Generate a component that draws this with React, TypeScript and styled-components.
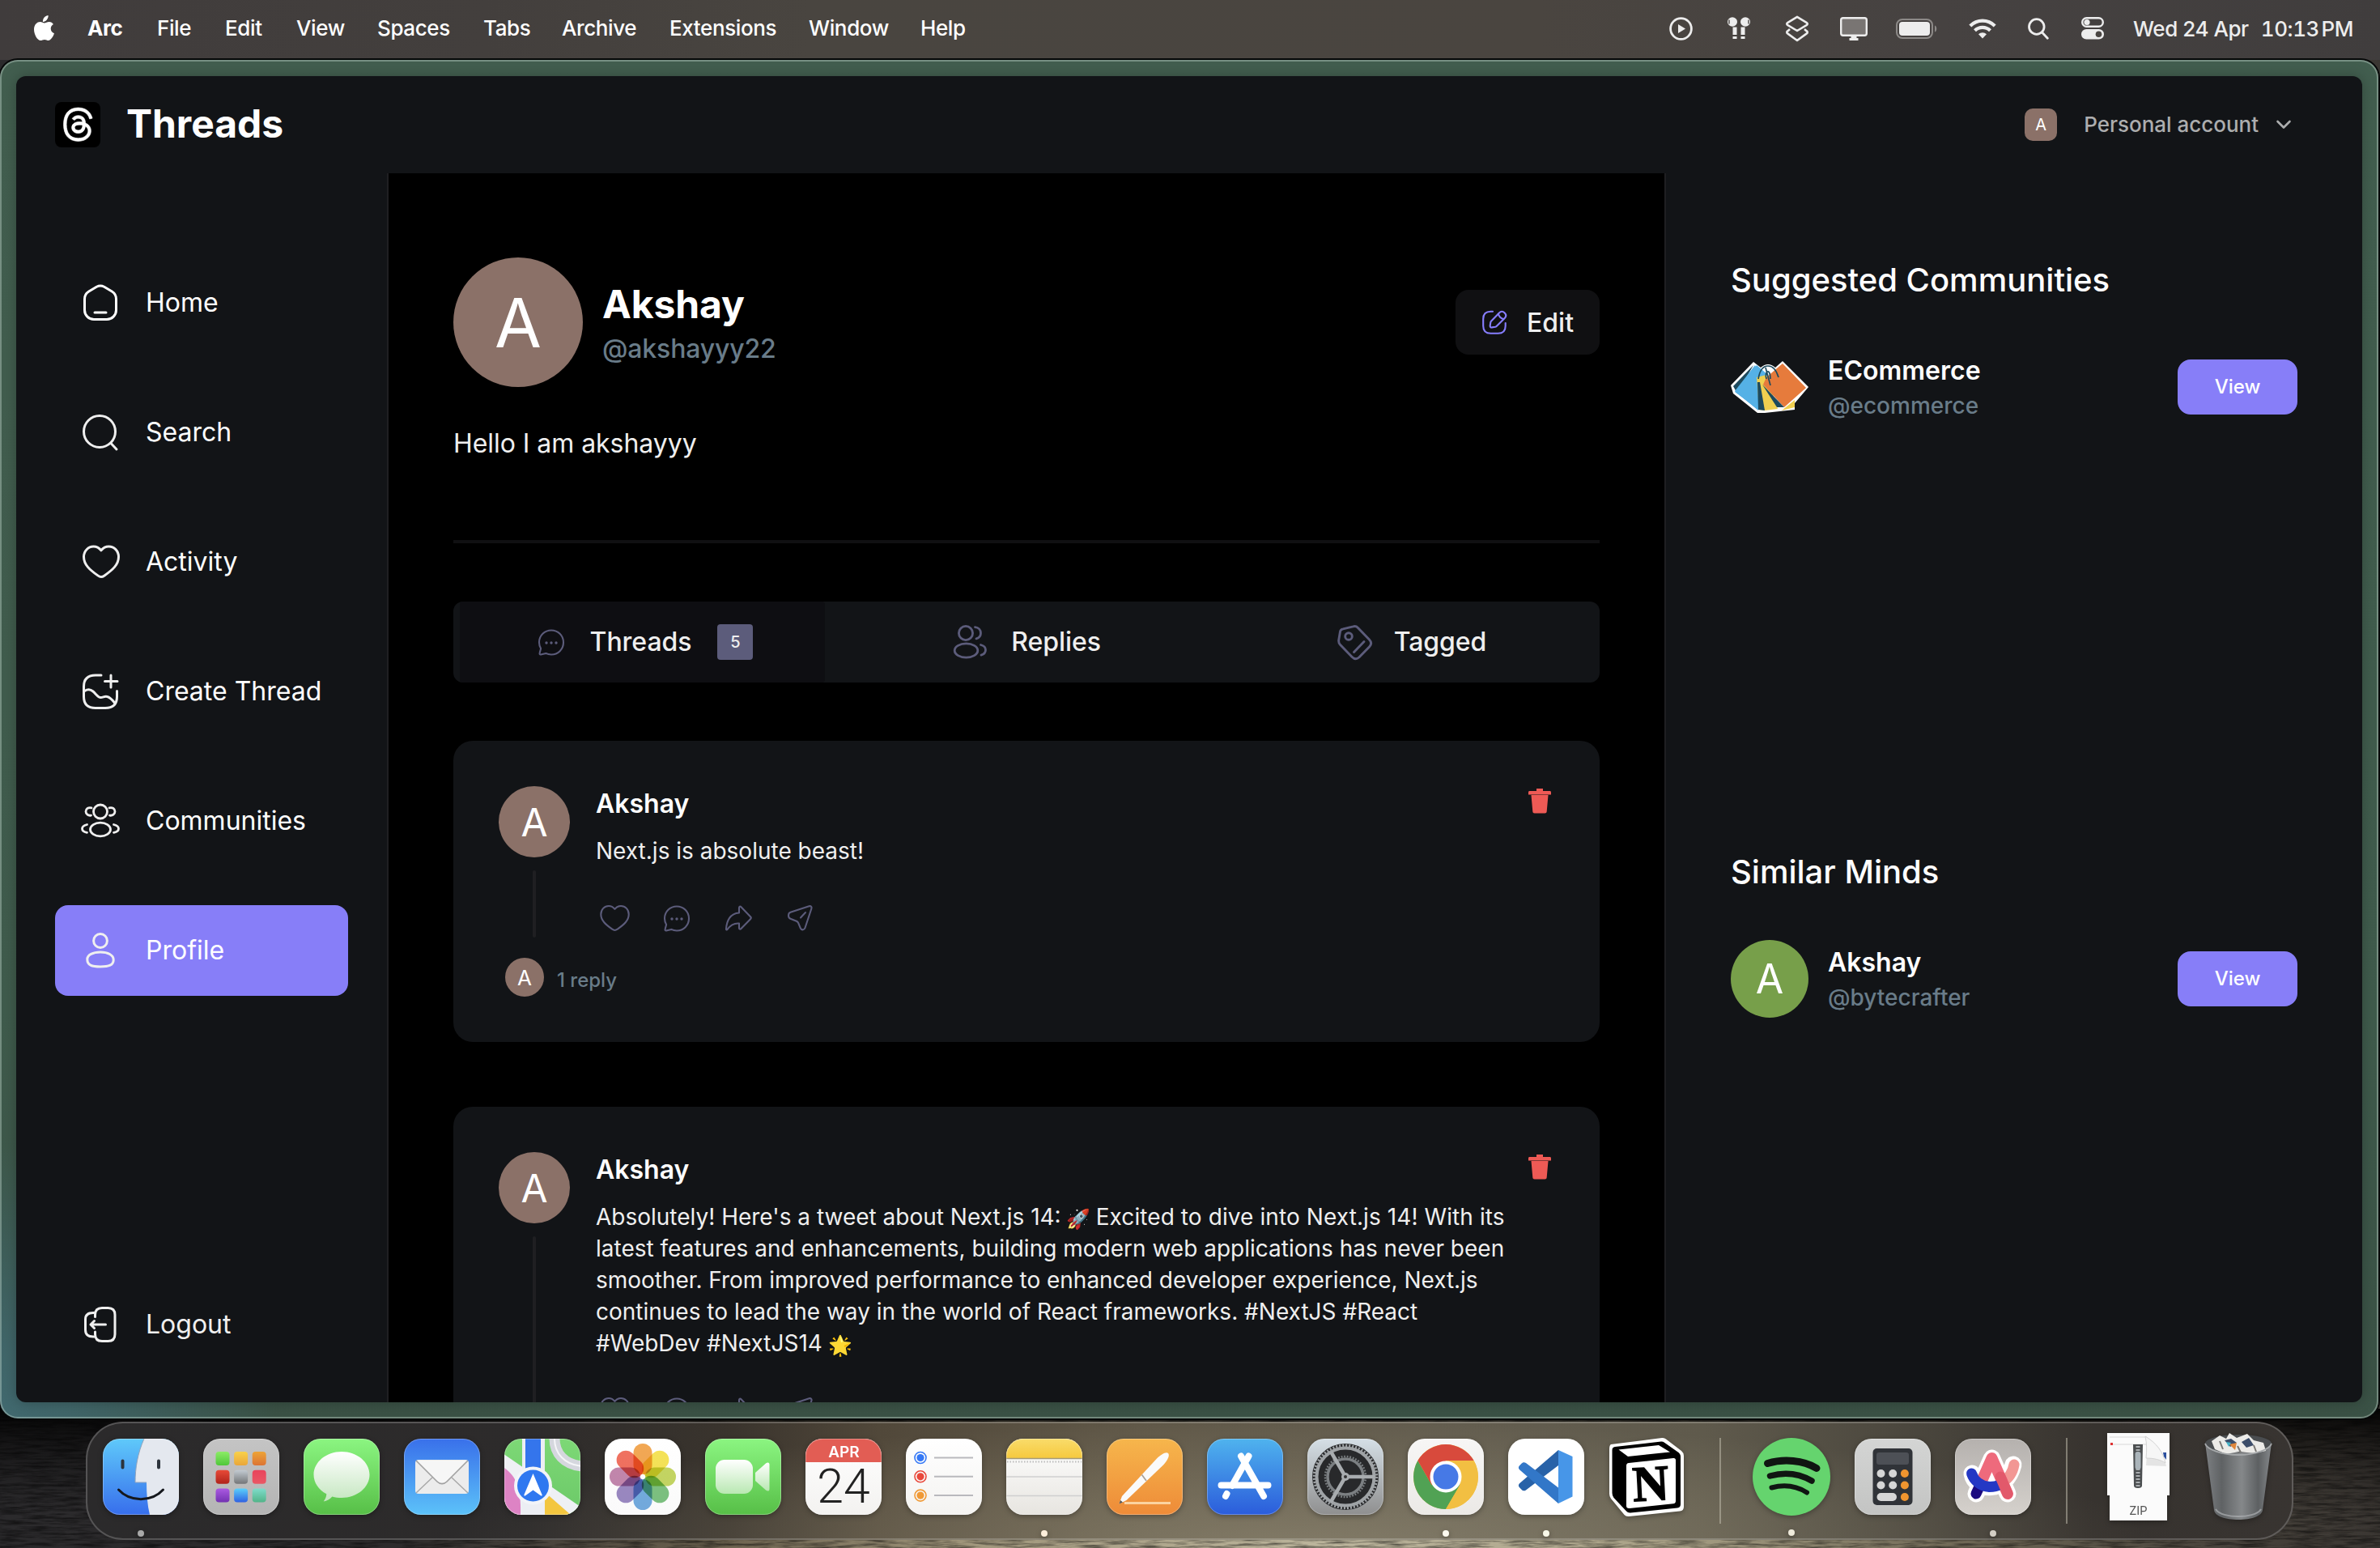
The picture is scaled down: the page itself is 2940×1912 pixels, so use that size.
import React from "react";
import styled, { createGlobalStyle } from "styled-components";

const GlobalStyle = createGlobalStyle`
  *, *::before, *::after { box-sizing: border-box; }
  html, body { margin: 0; padding: 0; background: #1c1b1c; }
  body { font-family: Inter, "Liberation Sans", sans-serif; color: #fff; overflow: hidden; }
  svg { display: block; flex: none; }
`;

/* ---------- Desktop ---------- */

const Desktop = styled.div`
  position: relative;
  width: 2940px;
  height: 1912px;
  display: flex;
  flex-direction: column;
  overflow: hidden;
  background: linear-gradient(90deg, #2b2a2c 0, #2d2b2c 500px, #6e6450 900px, #a1977c 1200px, #bdb69d 1650px, #aaa287 2050px, #6b6452 2450px, #48433c 2750px, #3a3632 2940px);
`;

const Wallpaper = styled.svg`
  position: absolute;
  left: 0;
  bottom: 0;
`;

const Shade = styled.div`
  position: absolute;
  left: 0;
  right: 0;
  bottom: 0;
  height: 172px;
  background: linear-gradient(180deg, rgba(0, 0, 0, 0.95) 0, rgba(0, 0, 0, 0.6) 30px, rgba(0, 0, 0, 0.22) 80px, rgba(0, 0, 0, 0) 130px);
`;

/* ---------- Menu bar ---------- */

const MenuBar = styled.header`
  position: relative;
  flex: none;
  height: 74px;
  display: flex;
  align-items: flex-start;
  justify-content: space-between;
  padding: 0 33px 0 41px;
  background: linear-gradient(90deg, #403c3c 0, #433f3d 600px, #494540 1000px, #4a4540 1900px, #464241 2400px, #403d3d 2940px);
`;

const MenuGroup = styled.div`
  display: flex;
  align-items: center;
  height: 70px;
`;

const MenuItem = styled.span<{ $w: number; $bold?: boolean }>`
  width: ${(p) => p.$w}px;
  font-size: 26px;
  line-height: 32px;
  letter-spacing: -0.38px;
  font-weight: ${(p) => (p.$bold ? 700 : 500)};
  white-space: nowrap;
`;

const StatusSlot = styled.span<{ $w: number }>`
  width: ${(p) => p.$w}px;
  display: flex;
`;

const Clock = styled.span`
  font-size: 26px;
  font-weight: 500;
  color: #ededed;
  white-space: pre;
  letter-spacing: -0.45px;
  width: 272px;
  display: flex;
  justify-content: space-between;
`;

const Time = styled.span`
  font-variant-numeric: tabular-nums;
  word-spacing: -4px;
`;

/* ---------- Browser window ---------- */

const BrowserWindow = styled.div`
  position: relative;
  flex: none;
  width: 2938px;
  height: 1678px;
  border-radius: 22px;
  padding: 18px;
  border: 2px solid rgba(205, 225, 215, 0.38);
  background:
    radial-gradient(circle 340px at 0 100%, #41696f 0, rgba(65, 105, 111, 0.85) 25%, rgba(65, 105, 111, 0) 100%) border-box,
    linear-gradient(180deg, #425e4f 0, #3f5b4c 70%, #3a5145 100%) border-box;
  box-shadow: 0 0 0 2px #060808;
`;

const Page = styled.div`
  width: 2898px;
  height: 1638px;
  border-radius: 12px;
  overflow: hidden;
  display: flex;
  flex-direction: column;
  background: #121417;
  box-shadow: 0 0 16px rgba(0, 0, 0, 0.25);
`;

const TopBar = styled.div`
  flex: none;
  height: 120px;
  padding: 0 87px 0 48px;
  display: flex;
  align-items: center;
  justify-content: space-between;
`;

const Brand = styled.div`
  display: flex;
  align-items: center;
  gap: 32px;
`;

const BrandName = styled.span`
  font-size: 48px;
  font-weight: 700;
  line-height: 58px;
  letter-spacing: -0.05px;
  padding-bottom: 3px;
`;

const Account = styled.div`
  display: flex;
  align-items: center;
  font-size: 26px;
  font-weight: 500;
  color: #acadae;
`;

const AccountName = styled.span`
  margin: 0 21px 0 33px;
  padding-bottom: 2px;
  letter-spacing: -0.02px;
`;

const Avatar = styled.div<{ $size: number; $font: number; $color?: string; $radius?: string }>`
  flex: none;
  width: ${(p) => p.$size}px;
  height: ${(p) => p.$size}px;
  border-radius: ${(p) => p.$radius || "50%"};
  background: ${(p) => p.$color || "#8b7168"};
  color: #fff;
  display: flex;
  align-items: center;
  justify-content: center;
  font-size: ${(p) => p.$font}px;
  font-weight: 400;
`;

const Body = styled.div`
  flex: 1;
  min-height: 0;
  display: grid;
  grid-template-columns: 460px 1576px 1fr;
  grid-template-rows: minmax(0, 1fr);
`;

/* ---------- Left navigation ---------- */

const Sidebar = styled.nav`
  border-right: 2px solid #1f1f22;
  padding: 104px 0 40px 48px;
  display: flex;
  flex-direction: column;
  gap: 48px;
`;

const NavItem = styled.a<{ $active?: boolean; $last?: boolean }>`
  width: 362px;
  height: 112px;
  flex: none;
  border-radius: 16px;
  padding: 0 32px;
  display: flex;
  align-items: center;
  gap: 32px;
  font-size: 32px;
  font-weight: 400;
  color: ${(p) => (p.$last ? "#efefef" : "#fff")};
  background: ${(p) => (p.$active ? "#877ef8" : "transparent")};
  margin-top: ${(p) => (p.$last ? "auto" : "0")};
`;

const NavLabel = styled.span`
  padding-bottom: 2px;
`;

/* ---------- Profile column ---------- */

const Main = styled.main`
  min-height: 0;
  overflow: hidden;
  background: #000;
  padding: 104px 80px 0;
  display: flex;
  flex-direction: column;
`;

const ProfileHead = styled.div`
  flex: none;
  height: 160px;
  display: flex;
  align-items: center;
`;

const ProfileText = styled.div`
  margin: 7px 0 0 24px;
  flex: 1;
`;

const ProfileName = styled.h2`
  margin: 0;
  font-size: 48px;
  font-weight: 700;
  line-height: 58px;
  letter-spacing: -0.1px;
`;

const ProfileHandle = styled.p`
  margin: 0;
  font-size: 32px;
  font-weight: 500;
  line-height: 52px;
  letter-spacing: -0.15px;
  color: #697c89;
`;

const EditButton = styled.button`
  width: 178px;
  height: 80px;
  border: 0;
  border-radius: 16px;
  padding: 0 0 0 32px;
  background: #101012;
  color: #efefef;
  font: 500 32px Inter, "Liberation Sans", sans-serif;
  display: flex;
  align-items: center;
  gap: 24px;
`;

const Bio = styled.p`
  flex: none;
  margin: 48px 0 0;
  font-size: 32px;
  line-height: 44px;
  letter-spacing: -0.05px;
  color: #efefef;
`;

const Divider = styled.div`
  flex: none;
  height: 4px;
  margin: 97px 0 72px;
  background: #101012;
`;

const Tabs = styled.div`
  flex: none;
  height: 100px;
  border-radius: 12px;
  padding: 0 8px;
  background: #121417;
  display: flex;
`;

const Tab = styled.div<{ $w: number; $active?: boolean }>`
  width: ${(p) => p.$w}px;
  border-radius: 4px;
  background: ${(p) => (p.$active ? "#0e0e12" : "transparent")};
  color: #efefef;
  display: flex;
  align-items: center;
  justify-content: center;
  gap: 24px;
  font-size: 32px;
  font-weight: 500;
  letter-spacing: -0.05px;
`;

const TabLabel = styled.span`
  padding-bottom: 2px;
`;

const Count = styled.span`
  width: 44px;
  height: 44px;
  margin-left: 8px;
  border-radius: 4px;
  background: #5c5c7b;
  display: flex;
  align-items: center;
  justify-content: center;
  font-size: 20px;
  font-weight: 500;
`;

const Card = styled.article<{ $gap: number }>`
  flex: none;
  margin-top: ${(p) => p.$gap}px;
  border-radius: 24px;
  padding: 56px;
  background: #121417;
`;

const CardTop = styled.div`
  display: flex;
`;

const Rail = styled.div`
  display: flex;
  flex-direction: column;
  align-items: center;
`;

const RailLine = styled.div`
  flex: 1;
  width: 4px;
  margin-top: 16px;
  border-radius: 2px;
  background: #1f1f22;
`;

const CardContent = styled.div`
  flex: 1;
  margin-left: 32px;
`;

const Author = styled.h4`
  margin: 0;
  padding-top: 1px;
  font-size: 32px;
  line-height: 41px;
  font-weight: 600;
`;

const PostText = styled.p`
  margin: 19px 0 0;
  font-size: 28px;
  line-height: 39px;
  color: #efefef;
  white-space: pre;
`;

const TextRun = styled.span<{ $spacing: number }>`
  letter-spacing: ${(p) => p.$spacing}px;
`;

const Emoji = styled.span`
  display: inline-block;
  width: 28px;
  height: 28px;
  margin-left: 7px;
  font: 24px/28px "Noto Color Emoji", sans-serif;
  vertical-align: -1px;
`;

const Actions = styled.div`
  display: flex;
  gap: 28px;
  margin-top: 39px;
`;

const TrashSlot = styled.div`
  margin: 3px 4px 0 0;
`;

const Replies = styled.div`
  display: flex;
  align-items: center;
  gap: 16px;
  margin: 25px 0 0 8px;
`;

const ReplyCount = styled.span`
  margin-top: 7px;
  font-size: 24px;
  font-weight: 500;
  line-height: 30px;
  color: #697c89;
`;

/* ---------- Right column ---------- */

const Aside = styled.aside`
  border-left: 2px solid #1f1f22;
  padding: 104px 80px 0;
`;

const Section = styled.section`
  height: 731px;
`;

const SectionTitle = styled.h3`
  margin: 0 0 56px;
  font-size: 40px;
  font-weight: 500;
  line-height: 56px;
`;

const UserRow = styled.div`
  display: flex;
  align-items: center;
  height: 96px;
`;

const UserText = styled.div`
  flex: 1;
  margin: 1px 0 0 24px;
`;

const UserName = styled.h4`
  margin: 0;
  font-size: 32px;
  line-height: 44px;
  font-weight: 600;
`;

const UserHandle = styled.p`
  margin: 0;
  font-size: 28px;
  line-height: 42px;
  font-weight: 500;
  color: #697c89;
`;

const ViewButton = styled.button`
  width: 148px;
  height: 68px;
  border: 0;
  border-radius: 16px;
  padding: 0 0 2px;
  background: #877ef8;
  color: #fff;
  font: 500 24px Inter, "Liberation Sans", sans-serif;
`;

/* ---------- Dock ---------- */

const DockBar = styled.div`
  position: relative;
  flex: none;
  width: 2727px;
  height: 146px;
  margin: 4px 0 0 106px;
  border-radius: 46px;
  border: 2px solid rgba(255, 255, 255, 0.2);
  padding: 0 23px 0 19px;
  display: flex;
  align-items: center;
  gap: 30px;
  background:
    radial-gradient(ellipse 1050px 150px at 1500px 150px, rgba(160, 152, 128, 0.5), rgba(160, 152, 128, 0)) border-box,
    linear-gradient(90deg, #2b2a2b 0, #2d2b2b 550px, #3a342d 800px, #51483a 980px, #605848 1300px, #635d4f 1700px, #5f5a4c 2000px, #47433b 2300px, #37332f 2480px, #383431 2727px) border-box;
`;

const DockItem = styled.div<{ $w?: number; $ml?: number; $dot?: string }>`
  position: relative;
  flex: none;
  width: ${(p) => p.$w || 94}px;
  margin-left: ${(p) => p.$ml || 0}px;
  margin-top: -10px;
  display: flex;
  justify-content: center;
  filter: drop-shadow(0 2px 3px rgba(0, 0, 0, 0.3));
  &::after {
    content: "";
    display: ${(p) => (p.$dot ? "block" : "none")};
    position: absolute;
    left: calc(50% - 4px);
    top: 113px;
    width: 8px;
    height: 8px;
    border-radius: 50%;
    background: ${(p) => p.$dot || "transparent"};
  }
`;

const Separator = styled.div<{ $ml: number; $mr: number }>`
  flex: none;
  width: 2px;
  height: 106px;
  background: rgba(200, 195, 180, 0.5);
  margin: 0 ${(p) => p.$mr}px 0 ${(p) => p.$ml}px;
`;

/* ---------- Icons ---------- */

type IconProps = { size?: number; color?: string; width?: number; children: React.ReactNode; box?: string };
const Line = ({ size = 48, color = "#efefef", width = 3, box = "0 0 48 48", children }: IconProps) => (
  <svg width={size} height={size} viewBox={box} fill="none" stroke={color} strokeWidth={width} strokeLinecap="round" strokeLinejoin="round">
    {children}
  </svg>
);

const HomeIcon = () => (
  <Line color="#fff">
    <path d="M19.3 4.3a10 10 0 0 1 9.4 0L38.3 10a11 11 0 0 1 5.2 9.4V33A11.5 11.5 0 0 1 32 44.5H16A11.5 11.5 0 0 1 4.500 33V19.400A11 11 0 0 1 9.700 10z" />
    <path d="M17 36h14" />
  </Line>
);
const SearchIcon = () => (
  <Line>
    <circle cx="23" cy="23" r="19.500" />
    <path d="M37 37.500 44 45" />
  </Line>
);
const HeartShape = () => (
  <path d="M24.900 42.500c-1.500 0-2.600-.6-4-1.600C11 34 3.500 27.500 3.500 17.800 3.500 10.500 9 5 15.500 5c4 0 7 1.800 9.400 4.800C27.300 6.800 30.500 5 34.400 5c6.600 0 12.100 5.500 12.100 12.800 0 9.700-7.500 16.200-17.500 23.100-1.400 1-2.600 1.600-4.100 1.600z" />
);
const ActivityIcon = () => (
  <Line>
    <HeartShape />
  </Line>
);
const CreateIcon = () => (
  <Line>
    <path d="M25 4h-7C8 4 3.500 8.500 3.500 18v12.500c0 9.500 4.500 14 14.500 14h12c10 0 14.500-4.500 14.500-14V23.500" />
    <path d="M29.500 11.500H45M37 4v15" />
    <path d="M4.500 23.500c3-2 7-2.500 10.500.5 4 3.500 6 7.500 9.500 7.500 3 0 4.500-2 8-1 4 1 7 5 9.500 8" />
  </Line>
);
const CommunitiesIcon = () => (
  <Line width={2.8}>
    <circle cx="24" cy="12.500" r="8.500" />
    <ellipse cx="24" cy="34.500" rx="12.500" ry="8.300" />
    <path d="M13 7.800C9 6.800 6 9 6 12.300s3 5.500 6.500 4.800M35 7.800c4-1 7 1.200 7 4.500s-3 5.500-6.500 4.800" />
    <path d="M7.500 28.500c-3.500.8-6 2.600-6 4.900s2.500 4.200 6 4.900M40.500 28.500c3.500.8 6 2.600 6 4.900s-2.500 4.200-6 4.900" />
  </Line>
);
const ProfileIcon = () => (
  <Line>
    <circle cx="24" cy="12" r="8.400" />
    <path d="M7.800 35c0-5.500 7-9 16.200-9s16.200 3.500 16.200 9.500c0 6.500-5.500 8.500-16.200 8.500S7.800 42 7.800 35z" />
  </Line>
);
const LogoutIcon = () => (
  <Line>
    <path d="M17.500 14.500V12c0-6 3-8.500 8.500-8.500h7.500c6 0 8.500 3 8.500 8.500v24c0 5.500-2.500 8.500-8.500 8.500H26c-5.500 0-8.500-2.500-8.500-8.500v-3" />
    <path d="M16 9.500h-1c-6 0-9.500 2-9.500 8v13c0 6 3 8.500 9.500 8.500h1" />
    <path d="M30.500 24H12M16.500 19.500 12 24l4.500 4.500" />
  </Line>
);

const dim = "#5c5c7b";
const LikeIcon = () => (
  <Line color={dim} width={2.6} box="-4.400 -6.200 60 60">
    <HeartShape />
  </Line>
);
const CommentIcon = () => (
  <Line color={dim} width={2.1}>
    <path d="M24 9.500c8.300 0 15 6.600 15 15s-6.700 15-15 15c-2.400 0-4.700-.5-6.700-1.600l-6.300 1.500c-1 .2-1.700-.6-1.400-1.600l1.500-5.800A15 15 0 0 1 9 24.500c0-8.400 6.700-15 15-15z" />
    <g fill={dim} stroke="none">
      <circle cx="18" cy="25" r="1.700" />
      <circle cx="24" cy="25" r="1.700" />
      <circle cx="30" cy="25" r="1.700" />
    </g>
  </Line>
);
const RepostIcon = () => (
  <Line color={dim} width={2.1}>
    <path d="M25 17.500v-6.200c0-1.700 1.300-2.200 2.500-1L39 22.300c1 1 1 2 0 3L27.500 37c-1.200 1.200-2.500.7-2.500-1v-5.500c-7-.6-11 2.500-14.500 7.500-.6.900-1.600.6-1.500-.5C9.600 27.500 14 18 25 17.500z" />
  </Line>
);
const ShareIcon = () => (
  <Line color={dim} width={2.1}>
    <path d="M12.500 16.800 35.500 9.300c2.200-.7 3.600.7 2.900 2.900L30.500 36c-1 3-4.500 3.200-5.700.3l-2.700-6.400a4 4 0 0 0-2.200-2.200l-7.500-3c-3.300-1.400-3.200-6.700.1-7.900z" />
    <path d="m25 23.500 6-6.500" />
  </Line>
);
const RepliesIcon = () => (
  <Line color={dim} width={2.8} box="-1 0 48 48">
    <circle cx="15" cy="13" r="8.600" />
    <path d="M26.500 5.700c4.200.4 7 3.500 7 7.300 0 3.500-2.300 6-5.500 6.800" />
    <ellipse cx="15.500" cy="34.500" rx="14.300" ry="8.600" />
    <path d="M33.500 27.500c3.800 1 6 3.200 6 6.200 0 3.200-2 5.300-5.500 6.400" />
  </Line>
);
const TagIcon = () => (
  <Line color={dim} width={2.9}>
    <path d="M9 7.800 21.500 4.800a6 6 0 0 1 6 1.700l14 14.500c2.800 3 2.800 6 .2 8.700L29 42.700c-2.800 2.600-6 2.600-8.800-.2L5.700 27.500c-1.600-1.600-2.300-3.500-2-5.800L5.500 11c.3-1.700 1.600-2.800 3.500-3.200z" />
    <circle cx="16" cy="17" r="4.300" />
    <path d="M22.500 36.500 35 23.500" />
  </Line>
);
const EditIcon = () => (
  <Line size={32} box="0 0 32 32" color="#877eff" width={2.1}>
    <path d="M14 2.800h-2.500C5 2.800 2.200 5.500 2.200 12v8.500C2.200 27 5 29.800 11.500 29.800h9c6.500 0 9.200-2.800 9.200-9.300V17" />
    <path d="m22.200 4.200-10 10.200c-.4.400-.8 1.200-.9 1.700l-.6 4c-.2 1.500.8 2.500 2.300 2.300l3.900-.6c.5-.1 1.300-.5 1.700-.9L28.700 11c1.800-1.800 2.600-3.800 0-6.500s-4.800-2-6.500-.3z" />
    <path d="M20.800 5.800c.9 3 3.200 5.400 6.200 6.300" />
  </Line>
);
const TrashIcon = () => (
  <svg width="28" height="31" viewBox="0 0 28 31" fill="#ee5a55">
    <path d="M10 0h8v3h8.500c.9 0 1.500.6 1.500 1.500v3H0v-3C0 3.600.6 3 1.500 3H10zM3.500 8h21l-1.800 20.300c-.1 1.500-1 2.200-2.400 2.200H7.700c-1.400 0-2.300-.7-2.400-2.200z" />
  </svg>
);
const Chevron = () => (
  <Line size={20} box="0 0 20 20" color="#acadae" width={2.6}>
    <path d="m2.500 6 7.500 7.500L17.500 6" />
  </Line>
);

const ThreadsLogo = () => (
  <svg width="56" height="56" viewBox="0 0 56 56">
    <rect width="56" height="56" rx="8" fill="#000" />
    <g transform="translate(7.700 7) scale(.2155)" fill="#fff">
      <path d="M141.537 88.988a66.667 66.667 0 0 0-2.518-1.143c-1.482-27.307-16.403-42.940-41.457-43.100h-.34c-14.986 0-27.449 6.396-35.120 18.036l13.779 9.452c5.730-8.695 14.724-10.548 21.348-10.548h.229c8.249.053 14.474 2.452 18.503 7.129 2.932 3.405 4.893 8.111 5.864 14.050-7.314-1.243-15.224-1.626-23.680-1.140-23.820 1.371-39.134 15.264-38.105 34.568.522 9.792 5.400 18.216 13.735 23.719 7.047 4.652 16.124 6.927 25.557 6.412 12.458-.683 22.231-5.436 29.049-14.127 5.178-6.600 8.453-15.153 9.899-25.930 5.937 3.583 10.337 8.298 12.767 13.966 4.132 9.635 4.373 25.468-8.546 38.376-11.319 11.308-24.925 16.200-45.488 16.351-22.809-.169-40.060-7.484-51.275-21.742C35.236 139.966 29.808 120.682 29.605 96c.203-24.682 5.630-43.966 16.133-57.317C56.954 24.425 74.204 17.110 97.013 16.940c22.975.17 40.526 7.520 52.171 21.847 5.710 7.026 10.015 15.860 12.853 26.162l16.147-4.308c-3.440-12.680-8.853-23.606-16.219-32.668C147.036 9.607 125.202.195 97.070 0h-.113C68.882.194 47.292 9.642 32.788 28.080 19.882 44.485 13.224 67.315 13.001 95.932L13 96v.067c.224 28.617 6.882 51.447 19.788 67.854C47.292 182.358 68.882 191.806 96.957 192h.113c24.960-.173 42.554-6.708 57.048-21.189 18.963-18.945 18.392-42.692 12.142-57.270-4.484-10.454-13.033-18.945-24.723-24.553zM98.440 129.507c-10.440.588-21.286-4.098-21.820-14.135-.397-7.442 5.296-15.746 22.461-16.735 1.966-.114 3.895-.169 5.790-.169 6.235 0 12.068.606 17.371 1.765-1.978 24.702-13.580 28.713-23.802 29.274z" stroke="#fff" strokeWidth="3" />
    </g>
  </svg>
);

const CommunityImage = () => (
  <svg width="96" height="96" viewBox="0 0 96 96">
    <path d="M28 17 37 24q9-8 18 0L64 16 96 48 79 68 79 76 42 80 33 80 3 56 0 46z" fill="#fff" />
    <path d="M28 21 3 47l5 9z" fill="#1d4a5e" />
    <path d="M30 21 5 53l29 24 4-40z" fill="#55b1e6" />
    <path d="M32 21 46 33 33 41 34 76 5 54z" fill="#55b1e6" />
    <path d="M32 36 44 33 58 75 42 77 35 76z" fill="#f0d050" />
    <path d="M33 42 36 42 42 77 34 76z" fill="#1d4a5e" />
    <path d="M64 19 93 49 66 73 40 45 44 36z" fill="#e67b3c" />
    <path d="M39 45 66 73 57 73z" fill="#1d4a5e" />
    <path d="M79 64v9l-16 4z" fill="#f0d050" />
    <path d="M34 38c2-12 7-16 12-16s10 4 13 14M44 38c-3-10 5-14 5 0M43 24l6 22" stroke="#1d4a5e" strokeWidth="1.700" fill="none" />
  </svg>
);

/* Menu bar glyphs */
const AppleLogo = () => (
  <svg width="27" height="32" viewBox="0 0 27 32" fill="#fff">
    <path d="M18.600 0c.2 2.100-.6 4.100-1.800 5.500C15.600 7 13.700 8 11.900 7.900c-.2-2 .7-4.100 1.800-5.400C15 1.100 17 .1 18.600 0zM24.900 10.900c-2 1.200-3.200 3-3.200 5.400 0 2.700 1.700 5 4.300 6-1 3.300-4.200 8.700-7.100 8.700-1.700 0-2.700-1.100-4.900-1.100s-3.300 1.100-4.900 1.100C5.400 31 1 23.600 1 17.400 1 11.400 4.800 8 8.600 8c2.200 0 4 1.400 5.300 1.400 1.200 0 3.300-1.500 5.900-1.500 2.100.1 4 1.100 5.100 3z" />
  </svg>
);
const PlayGlyph = () => (
  <svg width="29" height="29" viewBox="0 0 29 29">
    <circle cx="14.500" cy="14.500" r="12.900" fill="none" stroke="#ededed" strokeWidth="2.800" />
    <path d="m11 9 9 5.500-9 5.500z" fill="#ededed" />
  </svg>
);
const PodsGlyph = () => (
  <svg width="29" height="28" viewBox="0 0 29 28" fill="#ededed">
    <ellipse cx="6" cy="6" rx="6" ry="5.700" />
    <ellipse cx="22" cy="6" rx="6" ry="5.700" />
    <path d="M6.500 12.500h5v9.500h-5zM16.500 12.500h5v9.500h-5zM6.500 24h5v3h-5zM16.500 24h5v3h-5z" />
    <path d="M2 3.500v5M26 3.500v5" stroke="#4a4643" strokeWidth="1.400" />
  </svg>
);
const LayersGlyph = () => (
  <svg width="30" height="33" viewBox="0 0 30 33" fill="none" stroke="#ededed" strokeWidth="2.600" strokeLinejoin="round">
    <path d="m15 1.800 11.500 7q2.500 1.700 0 3.400L15 19 3.500 12.200Q1 10.500 3.500 8.800z" />
    <path d="m6 17-2.500 2.200q-2.500 1.700 0 3.400L15 31l11.500-8.400q2.500-1.700 0-3.400L24 17" />
  </svg>
);
const DisplayGlyph = () => (
  <svg width="34" height="29" viewBox="0 0 34 29">
    <rect x="1.200" y="1.200" width="31.600" height="21.600" rx="2.500" fill="#797573" stroke="#ededed" strokeWidth="2.400" />
    <path d="M13.500 23h7v3h2V29h-11v-3h2z" fill="#ededed" />
  </svg>
);
const BatteryGlyph = () => (
  <svg width="52" height="25" viewBox="0 0 52 25">
    <rect x="1" y="1" width="44" height="23" rx="7" fill="none" stroke="#8d8a88" strokeWidth="2" />
    <rect x="4" y="4" width="38" height="17" rx="4" fill="#ededed" />
    <path d="M48 8.500c3 1 3 7 0 8z" fill="#8d8a88" />
  </svg>
);
const WifiGlyph = () => (
  <svg width="34" height="26" viewBox="0 0 34 26" fill="none" stroke="#ededed" strokeWidth="4.200">
    <path d="M1.800 10a21.500 21.500 0 0 1 30.400 0M7.500 15.800a13.500 13.500 0 0 1 19 0" />
    <path d="m17 25.500-5-5.200a7 7 0 0 1 10 0z" fill="#ededed" stroke="none" />
  </svg>
);
const FindGlyph = () => (
  <svg width="26" height="27" viewBox="0 0 26 27" fill="none" stroke="#ededed" strokeWidth="2.800" strokeLinecap="round">
    <circle cx="10.800" cy="11" r="9.300" />
    <path d="m17.800 18.300 6.500 7" />
  </svg>
);
const ControlGlyph = () => (
  <svg width="28" height="28" viewBox="0 0 28 28">
    <rect x="1.200" y="1.200" width="25.600" height="10.600" rx="5.300" fill="none" stroke="#ededed" strokeWidth="2.400" />
    <circle cx="7" cy="6.500" r="3.600" fill="#ededed" />
    <rect y="15" width="28" height="12.500" rx="6.250" fill="#ededed" />
    <circle cx="21.500" cy="21.200" r="3.800" fill="#4a4643" />
  </svg>
);

/* Dock tiles */
type TileProps = { id: string; from: string; to: string; children?: React.ReactNode };
const Tile = ({ id, from, to, children }: TileProps) => (
  <svg width="94" height="94" viewBox="0 0 94 94">
    <defs>
      <linearGradient id={id} x1="0" y1="0" x2="0" y2="1">
        <stop offset="0" stopColor={from} />
        <stop offset="1" stopColor={to} />
      </linearGradient>
      <clipPath id={id + "-clip"}>
        <rect width="94" height="94" rx="21" />
      </clipPath>
    </defs>
    <g clipPath={`url(#${id}-clip)`}>
      <rect width="94" height="94" fill={`url(#${id})`} />
      {children}
    </g>
    <rect x=".5" y=".5" width="93" height="93" rx="20.500" fill="none" stroke="#fff" strokeOpacity=".28" />
  </svg>
);

const Finder = () => (
  <Tile id="finder" from="#5fc9fa" to="#376eec">
    <path d="M51 0c-8 18-11 36-11 54h14c0 14 1 28 4 40h36V0z" fill="#e4e8ef" />
    <path d="M24.500 27.500v8M69 27.500v8" stroke="#2c333c" strokeWidth="4" strokeLinecap="round" />
    <path d="M51 0c-8 18-11 36-11 54h14" fill="none" stroke="#8fa3bd" strokeWidth="1" />
    <path d="M19.500 63c14 15.500 41 15.500 55 0" fill="none" stroke="#15181d" strokeWidth="3" strokeLinecap="round" />
  </Tile>
);
const padColors = [
  ["#8cec66", "#4fc73a"], ["#f8d14a", "#eaa63a"], ["#eda437", "#dc7434"],
  ["#e84a38", "#b0241c"], ["#c3cbd2", "#747678"], ["#e9445c", "#e95865"],
  ["#ab5ae2", "#7332b2"], ["#5bd0fb", "#2f62e2"], ["#7fdccb", "#52b489"],
];
const Launchpad = () => (
  <Tile id="launchpad" from="#c4c4c4" to="#b4b4b4">
    {padColors.map(([a, b], i) => (
      <g key={a}>
        <linearGradient id={"pad" + i} x1="0" y1="0" x2="0" y2="1">
          <stop offset="0" stopColor={a} />
          <stop offset="1" stopColor={b} />
        </linearGradient>
        <rect x={15.5 + (i % 3) * 22.600} y={16 + Math.floor(i / 3) * 22.700} width="17" height="17" rx="4" fill={`url(#pad${i})`} />
      </g>
    ))}
  </Tile>
);
const Messages = () => (
  <Tile id="messages" from="#8bf581" to="#57bf47">
    <linearGradient id="bubble" x1="0" y1="0" x2="0" y2="1">
      <stop offset="0" stopColor="#fff" />
      <stop offset="1" stopColor="#c4e6bf" />
    </linearGradient>
    <path d="M47 16c19 0 34.500 12.800 34.500 28.500S66 73 47 73c-4 0-8-.6-11.600-1.600-3 3.400-6.500 5.300-10.700 6.200 2.200-3 3.500-6 3.600-9.300C18.500 63 12.500 54.300 12.500 44.500 12.500 28.800 28 16 47 16z" fill="url(#bubble)" />
  </Tile>
);
const Mail = () => (
  <Tile id="mail" from="#3970ea" to="#5cc2f9">
    <rect x="14" y="26" width="66" height="42" rx="4" fill="#ececec" />
    <path d="m15 67 20-19M79 67 59 48" stroke="#a9a9a9" strokeWidth="1.500" />
    <path d="m15 27 26 26c3.500 3.500 8.500 3.500 12 0l26-26" fill="#f6f6f6" stroke="#a0a0a0" strokeWidth="1.600" />
  </Tile>
);
const Maps = () => (
  <Tile id="maps" from="#7dd876" to="#6cc968">
    <path d="M-2 18 94 84v12H-2z" fill="#eef0f4" />
    <path d="M0 36c14 10 21 24 20 58H0z" fill="#dd83c4" />
    <path d="m50 66 32 28H50z" fill="#f3c63f" />
    <path d="M22 0h28v94H22z" fill="#eceef3" />
    <path d="M26 0h19v60H26z" fill="#3475ec" />
    <path d="M62 0c0 18 12 32 34 34" fill="none" stroke="#d5d7de" strokeWidth="13" />
    <path d="M62 0c0 18 12 32 34 34" fill="none" stroke="#f5f5f8" strokeWidth="2" />
    <circle cx="35.500" cy="58" r="23.500" fill="#f2f4f8" />
    <circle cx="35.500" cy="58" r="19.500" fill="#2f78f0" />
    <path d="m35.500 43 11 26c.6 1.500-.6 2-1.600 1.300L35.500 63.500l-9.400 6.800c-1 .7-2.200.2-1.600-1.300z" fill="#fff" />
  </Tile>
);
const petals = ["#f09a38", "#f4df3c", "#bcd049", "#67b86c", "#5d9edb", "#8a76b8", "#b9739f", "#ee5a45"];
const Photos = () => (
  <Tile id="photos" from="#fff" to="#fafafa">
    {petals.map((c, i) => (
      <rect key={c} x="35.500" y="6" width="23" height="38" rx="11.500" fill={c} opacity=".86" transform={`rotate(${i * 45} 47 47)`} style={{ mixBlendMode: "multiply" }} />
    ))}
  </Tile>
);
const FaceTime = () => (
  <Tile id="facetime" from="#8bf581" to="#57bf47">
    <linearGradient id="cam" x1="0" y1="0" x2="0" y2="1">
      <stop offset="0" stopColor="#fff" />
      <stop offset="1" stopColor="#b9e8b2" />
    </linearGradient>
    <rect x="13" y="26" width="46" height="42" rx="11" fill="url(#cam)" />
    <path d="M62 42 75 30.500c2.500-2 4.500-1.200 4.500 1.500v30c0 2.700-2 3.500-4.500 1.500L62 52z" fill="url(#cam)" />
  </Tile>
);
const Calendar = () => (
  <Tile id="calendar" from="#fff" to="#f3f2f0">
    <rect width="94" height="29" fill="#e25d54" />
    <text x="47.500" y="22.500" textAnchor="middle" fontFamily="Inter, sans-serif" fontSize="19" fontWeight="600" fill="#fff">APR</text>
    <text x="47" y="79" textAnchor="middle" fontFamily="Roboto, sans-serif" fontSize="59" fontWeight="300" fill="#222">24</text>
  </Tile>
);
const Reminders = () => (
  <Tile id="reminders" from="#fff" to="#f4f3f1">
    {["#3478f6", "#e9493c", "#f09a37"].map((c, i) => (
      <g key={c}>
        <circle cx="18" cy={23.500 + i * 23.300} r="7" fill="none" stroke={c} strokeWidth="1.600" />
        <circle cx="18" cy={23.500 + i * 23.300} r="4.600" fill={c} />
        <path d={`M35 ${23.500 + i * 23.300}h48`} stroke="#b9b9bd" strokeWidth="2" />
      </g>
    ))}
  </Tile>
);
const Notes = () => (
  <Tile id="notes" from="#fff" to="#e7e5e0">
    <linearGradient id="pad-top" x1="0" y1="0" x2="0" y2="1">
      <stop offset="0" stopColor="#f9dc6b" />
      <stop offset="1" stopColor="#f6c93e" />
    </linearGradient>
    <rect width="94" height="24" fill="url(#pad-top)" />
    <path d="M0 24.500h94" stroke="#a59a78" strokeWidth="1.500" />
    <path d="M1 28.500h92" stroke="#bbb" strokeWidth="2" strokeDasharray="1.500 2" />
    <path d="M0 47h94M0 70.500h94" stroke="#cfcfcf" strokeWidth="1.500" />
  </Tile>
);
const Pages = () => (
  <Tile id="pages" from="#f6b64c" to="#ee8b38">
    <path d="M22 79.500h57" stroke="#fbd3a0" strokeWidth="3" />
    <path d="M15.500 80.500 19 71 62 24.500c5-5 11.500-9 14-6.500s-1 9-5.500 14L24.500 76z" fill="#fafafa" />
    <path d="m43.500 44.500 5.500 7.500" stroke="#a9a29a" strokeWidth="1.800" />
    <path d="M15.500 80.500 17 76l3 2.500z" fill="#555" />
  </Tile>
);
const AppStore = () => (
  <Tile id="appstore" from="#4fb3ee" to="#2b5cdb">
    <g stroke="#fff" strokeWidth="8" strokeLinecap="round">
      <path d="M42 21.500 70 71M51.500 21.500 31 58M17.500 57.500h58M24.500 68l-1.500 3" />
    </g>
  </Tile>
);
const Settings = () => (
  <Tile id="settings" from="#d5dfe6" to="#8f8f8f">
    <circle cx="47" cy="47" r="41" fill="#28292b" />
    <circle cx="47" cy="47" r="35.500" fill="none" stroke="#9fa3a6" strokeWidth="4" />
    <circle cx="47" cy="47" r="38.500" fill="none" stroke="#9fa3a6" strokeWidth="3.500" strokeDasharray="2 2.030" />
    <circle cx="47" cy="47" r="22" fill="none" stroke="#7b7f82" strokeWidth="3.500" />
    <circle cx="47" cy="47" r="25" fill="none" stroke="#7b7f82" strokeWidth="2.500" strokeDasharray="1.800 1.800" />
    <path d="M47 47h36M47 47 29 16M47 47 29 78" stroke="#a8acaf" strokeWidth="4.500" />
    <circle cx="47" cy="47" r="5" fill="#a8acaf" />
    <circle cx="47" cy="47" r="2" fill="#333" />
  </Tile>
);
const Chrome = () => (
  <Tile id="chrome" from="#f7f6f5" to="#ebe9e6">
    <circle cx="47" cy="47" r="40" fill="#f2bf42" />
    <path d="M12.400 27A40 40 0 0 0 47 87L64.500 57 47 47l-17.500 10z" fill="#51a254" />
    <path d="M47 27h34.600A40 40 0 0 1 47 87L64.500 57z" fill="#f2bf42" />
    <path d="M12.400 27A40 40 0 0 1 81.600 27H47L29.500 57z" fill="#d84a3c" />
    <circle cx="47" cy="47" r="19.500" fill="#fff" />
    <circle cx="47" cy="47" r="15.500" fill="#4679e6" />
  </Tile>
);
const VSCode = () => (
  <Tile id="vscode" from="#fff" to="#fff">
    <path d="m62 14 17.500 8v49.500L62 80z" fill="#4796e8" />
    <path d="M62 14v19L22 63.500c-2 1.500-4 .8-5-.3l-3-3c-1.500-1.500-1.500-3.500 0-5z" fill="#2862a8" />
    <path d="M62 80V60.500L22 30c-2-1.500-4-.8-5 .3l-3 3c-1.500 1.500-1.500 3.500 0 5z" fill="#3277c8" />
  </Tile>
);
const Notion = () => (
  <svg width="94" height="100" viewBox="0 0 94 100">
    <path d="M3 10 66 2q3-.4 5 1.500L90 18q3 2.500 3 6v63q0 5-5 5.500L25 99q-3.500.4-5.500-2L3 77q-2-2.500-2-6V16q0-5 2-6z" fill="#fff" />
    <path d="M8 13 65 6.500q2-.2 4 1.200L85 19q4 2.500 4 6v59q0 4-4 4.500l-58 6q-3 .3-5-2L6.500 76Q4.500 73.500 4.500 70V17q0-3.500 3.500-4z" fill="#000" />
    <path d="M12.500 16.500 62 11l14 8.500-52 5.500z" fill="#fff" />
    <path d="M25 33 80 27q3-.3 3 2.500V80q0 3-3 3.300L26 89q-4 .3-4-3V36.500q0-3.200 3-3.500z" fill="#fff" />
    <text x="52" y="79" textAnchor="middle" fontFamily="Liberation Serif, serif" fontWeight="700" fontSize="62" fill="#000" stroke="#000" strokeWidth="1.500" transform="rotate(-3 52 60)">N</text>
  </svg>
);
const Spotify = () => (
  <svg width="96" height="96" viewBox="0 0 96 96">
    <circle cx="48" cy="48" r="48" fill="#65d46e" />
    <g fill="none" stroke="#101512" strokeLinecap="round">
      <path d="M18.500 31.500c20-6 44-4 60.500 6" strokeWidth="9" />
      <path d="M21.500 47c18-5 36-3 51.500 6" strokeWidth="7.500" />
      <path d="M23.500 61.500c15-4 30-2.500 43.500 6" strokeWidth="6" />
    </g>
  </svg>
);
const Calculator = () => (
  <Tile id="calc" from="#d4d5d4" to="#c3c4c3">
    <rect x="22.500" y="12" width="49" height="70" rx="5" fill="#303338" />
    <rect x="27" y="17" width="40" height="15" rx="3" fill="#4d5056" />
    {[0, 1, 2].map((r) =>
      [0, 1, 2].map((c) =>
        r === 2 && c === 1 ? null : (
          <rect key={`${r}${c}`} x={27.500 + c * 14.700} y={38 + r * 14.500} width={r === 2 && c === 0 ? 24.500 : 10} height="10" rx="5" fill={c === 2 ? "#f0952f" : "#d6d6d6"} />
        ),
      ),
    )}
  </Tile>
);
const ArcApp = () => (
  <Tile id="arcapp" from="#b5b1ae" to="#d5d1cc">
    <g fill="none" strokeLinecap="round" strokeLinejoin="round">
      <path d="M26 68 45.500 24 65 68M21 43c4 22 42 26 51-11" stroke="#fff" strokeWidth="21" />
      <path d="M73 32c-2 11-8 18-15 22" stroke="#f29794" strokeWidth="13" />
      <path d="M26 68 32 55" stroke="#1c0a80" strokeWidth="13" />
      <path d="M34 50 45.500 24 65 68" stroke="#ee6a7c" strokeWidth="14" />
      <path d="M20.500 43c3 9 11 15.500 22 16.500 6 0 10-1 14-3" stroke="#2438c4" strokeWidth="13" />
      <path d="m56 47 9 21" stroke="#e2596b" strokeWidth="13" />
    </g>
  </Tile>
);
const ZipFile = () => (
  <svg width="78" height="108" viewBox="0 0 78 108">
    <path d="M0 0h77v77h-3v31H3V77H0z" fill="#fbfbfb" />
    <path d="M3 5h46v9H6" fill="none" stroke="#d9d9d9" />
    <path d="M4 12h3v3H4z" fill="#d33" />
    <path d="M47 4c3 13 2 24 1 36l25 1C69 24 62 13 47 4z" fill="#e4e4e4" />
    <path d="M47 4c15 9 22 20 25 33-6-4-14-6-24-6 1-9 1-18-1-27z" fill="#f6f6f6" stroke="#ccc" strokeWidth=".8" />
    <path d="M69 24h4v9l-3-4z" fill="#2b4f9e" />
    <path d="M32 14h12l-1 51q0 3-5 3t-5-3z" fill="#4b4e50" />
    <path d="M38 16v50" stroke="#a9adb0" strokeWidth="5" strokeDasharray="2 2" />
    <rect x="34.500" y="23" width="7" height="22" rx="3" fill="#aab4ba" />
    <text x="38.500" y="100.500" textAnchor="middle" fontFamily="Roboto, sans-serif" fontSize="14.500" fill="#555">ZIP</text>
  </svg>
);
const Bin = () => (
  <svg width="84" height="108" viewBox="0 0 84 108">
    <linearGradient id="bin" x1="0" y1="0" x2="1" y2="0">
      <stop offset="0" stopColor="#7d8083" />
      <stop offset=".25" stopColor="#5f6264" />
      <stop offset=".55" stopColor="#85888a" />
      <stop offset=".8" stopColor="#5d6062" />
      <stop offset="1" stopColor="#85888b" />
    </linearGradient>
    <path d="M1 12 12 95c1 8 14 12 30 12s29-4 30-12l11-83z" fill="url(#bin)" />
    <ellipse cx="42" cy="13" rx="41" ry="11" fill="#4a4d50" />
    <path d="m9 10 10-7 8 4 4-7 9 6 13-5 8 8 12 3 3 10-14 3-19-2-16 3-14-6z" fill="#ecebe8" />
    <path d="m25 9 8-2 7 5-8 5zM46 11l9-5 6 9-9 3z" fill="#3c4d6a" />
    <path d="m31 14 9-2-2 9z" fill="#e0873c" />
    <path d="m27 11 6 1-3 5z" fill="#46b4c8" />
    <path d="m41 16 4 8M19 10l4 10M61 15l3 8" stroke="#7a7774" strokeWidth="2" />
    <path d="M1 13c2 7 20 14 41 14s39-7 41-14" fill="none" stroke="#a5a8aa" strokeWidth="1.800" />
    <path d="M14 94c4 7 18 9 28 9s24-2 28-9" fill="none" stroke="#aeb1b3" strokeWidth="2" opacity=".7" />
  </svg>
);

/* ---------- App ---------- */

const navigation = [
  { label: "Home", Icon: HomeIcon },
  { label: "Search", Icon: SearchIcon },
  { label: "Activity", Icon: ActivityIcon },
  { label: "Create Thread", Icon: CreateIcon },
  { label: "Communities", Icon: CommunitiesIcon },
  { label: "Profile", Icon: ProfileIcon, active: true },
];

const menus: [string, number][] = [
  ["File", 84], ["Edit", 88], ["View", 100], ["Spaces", 131], ["Tabs", 97],
  ["Archive", 133], ["Extensions", 172], ["Window", 138], ["Help", 70],
];

const dockApps: { Icon: () => React.ReactElement; dot?: string }[] = [
  { Icon: Finder, dot: "#a9a9a9" }, { Icon: Launchpad }, { Icon: Messages }, { Icon: Mail }, { Icon: Maps },
  { Icon: Photos }, { Icon: FaceTime }, { Icon: Calendar }, { Icon: Reminders }, { Icon: Notes, dot: "#fdeedb" },
  { Icon: Pages }, { Icon: AppStore }, { Icon: Settings }, { Icon: Chrome, dot: "#fdfaf0" },
  { Icon: VSCode, dot: "#f8f8ea" }, { Icon: Notion },
];

type ThreadProps = { gap: number; text: React.ReactNode; reply?: string };
const ThreadCard = ({ gap, text, reply }: ThreadProps) => (
  <Card $gap={gap}>
    <CardTop>
      <Rail>
        <Avatar $size={88} $font={48}>A</Avatar>
        <RailLine />
      </Rail>
      <CardContent>
        <Author>Akshay</Author>
        <PostText>{text}</PostText>
        <Actions>
          <LikeIcon />
          <CommentIcon />
          <RepostIcon />
          <ShareIcon />
        </Actions>
      </CardContent>
      <TrashSlot>
        <TrashIcon />
      </TrashSlot>
    </CardTop>
    {reply && (
      <Replies>
        <Avatar $size={48} $font={26}>A</Avatar>
        <ReplyCount>{reply}</ReplyCount>
      </Replies>
    )}
  </Card>
);

export default function App() {
  return (
    <>
      <GlobalStyle />
      <Desktop>
        <Wallpaper width="2940" height="172" viewBox="0 0 2940 172">
          <filter id="grain" x="0" y="0" width="100%" height="100%">
            <feTurbulence type="fractalNoise" baseFrequency="0.03 0.3" numOctaves="4" seed="8" />
            <feColorMatrix values="0 0 0 0 0  0 0 0 0 0  0 0 0 0 0  2.200 0 0 0 -0.8" />
          </filter>
          <rect width="2940" height="172" filter="url(#grain)" opacity=".5" />
        </Wallpaper>
        <Shade />

        <MenuBar>
          <MenuGroup>
            <StatusSlot $w={67}><AppleLogo /></StatusSlot>
            <MenuItem $w={86} $bold>Arc</MenuItem>
            {menus.map(([label, w]) => (
              <MenuItem key={label} $w={w}>{label}</MenuItem>
            ))}
          </MenuGroup>
          <MenuGroup>
            <StatusSlot $w={72}><PlayGlyph /></StatusSlot>
            <StatusSlot $w={71}><PodsGlyph /></StatusSlot>
            <StatusSlot $w={68}><LayersGlyph /></StatusSlot>
            <StatusSlot $w={69}><DisplayGlyph /></StatusSlot>
            <StatusSlot $w={90}><BatteryGlyph /></StatusSlot>
            <StatusSlot $w={73}><WifiGlyph /></StatusSlot>
            <StatusSlot $w={66}><FindGlyph /></StatusSlot>
            <StatusSlot $w={64}><ControlGlyph /></StatusSlot>
            <Clock>
              <span>Wed 24 Apr</span>
              <Time>10:13 PM</Time>
            </Clock>
          </MenuGroup>
        </MenuBar>

        <BrowserWindow>
          <Page>
            <TopBar>
              <Brand>
                <ThreadsLogo />
                <BrandName>Threads</BrandName>
              </Brand>
              <Account>
                <Avatar $size={40} $font={20} $radius="10px">A</Avatar>
                <AccountName>Personal account</AccountName>
                <Chevron />
              </Account>
            </TopBar>
            <Body>
              <Sidebar>
                {navigation.map(({ label, Icon, active }) => (
                  <NavItem key={label} $active={active}>
                    <Icon />
                    <NavLabel>{label}</NavLabel>
                  </NavItem>
                ))}
                <NavItem $last>
                  <LogoutIcon />
                  <NavLabel>Logout</NavLabel>
                </NavItem>
              </Sidebar>

              <Main>
                <ProfileHead>
                  <Avatar $size={160} $font={84}>A</Avatar>
                  <ProfileText>
                    <ProfileName>Akshay</ProfileName>
                    <ProfileHandle>@akshayyy22</ProfileHandle>
                  </ProfileText>
                  <EditButton>
                    <EditIcon />
                    Edit
                  </EditButton>
                </ProfileHead>
                <Bio>Hello I am akshayyy</Bio>
                <Divider />
                <Tabs>
                  <Tab $w={451} $active>
                    <CommentIcon />
                    <TabLabel>Threads</TabLabel>
                    <Count>5</Count>
                  </Tab>
                  <Tab $w={499}>
                    <RepliesIcon />
                    <TabLabel>Replies</TabLabel>
                  </Tab>
                  <Tab $w={450}>
                    <TagIcon />
                    <TabLabel>Tagged</TabLabel>
                  </Tab>
                </Tabs>
                <ThreadCard gap={72} text="Next.js is absolute beast!" reply="1 reply" />
                <ThreadCard
                  gap={80}
                  text={
                    <>
                      Absolutely! Here's a tweet about Next.js 14:
                      <Emoji>🚀</Emoji>
                      <TextRun $spacing={0.09}>{" Excited to dive into Next.js 14! With its\n"}</TextRun>
                      {"latest features and enhancements, building modern web applications has never been\n"}
                      <TextRun $spacing={-0.03}>{"smoother. From improved performance to enhanced developer experience, Next.js\n"}</TextRun>
                      {"continues to lead the way in the world of React frameworks. #NextJS #React\n"}
                      {"#WebDev #NextJS14"}
                      <Emoji>🌟</Emoji>
                    </>
                  }
                />
              </Main>

              <Aside>
                <Section>
                  <SectionTitle>Suggested Communities</SectionTitle>
                  <UserRow>
                    <CommunityImage />
                    <UserText>
                      <UserName>ECommerce</UserName>
                      <UserHandle>@ecommerce</UserHandle>
                    </UserText>
                    <ViewButton>View</ViewButton>
                  </UserRow>
                </Section>
                <Section>
                  <SectionTitle>Similar Minds</SectionTitle>
                  <UserRow>
                    <Avatar $size={96} $font={50} $color="#779f4a">A</Avatar>
                    <UserText>
                      <UserName>Akshay</UserName>
                      <UserHandle>@bytecrafter</UserHandle>
                    </UserText>
                    <ViewButton>View</ViewButton>
                  </UserRow>
                </Section>
              </Aside>
            </Body>
          </Page>
        </BrowserWindow>

        <DockBar>
          {dockApps.map(({ Icon, dot }, i) => (
            <DockItem key={i} $dot={dot}>
              <Icon />
            </DockItem>
          ))}
          <Separator $ml={13} $mr={9} />
          <DockItem $w={96} $dot="#eeeadb">
            <Spotify />
          </DockItem>
          <DockItem>
            <Calculator />
          </DockItem>
          <DockItem $dot="#d3cec5">
            <ArcApp />
          </DockItem>
          <Separator $ml={13} $mr={19} />
          <DockItem $w={78}>
            <ZipFile />
          </DockItem>
          <DockItem $w={84} $ml={12}>
            <Bin />
          </DockItem>
        </DockBar>
      </Desktop>
    </>
  );
}
